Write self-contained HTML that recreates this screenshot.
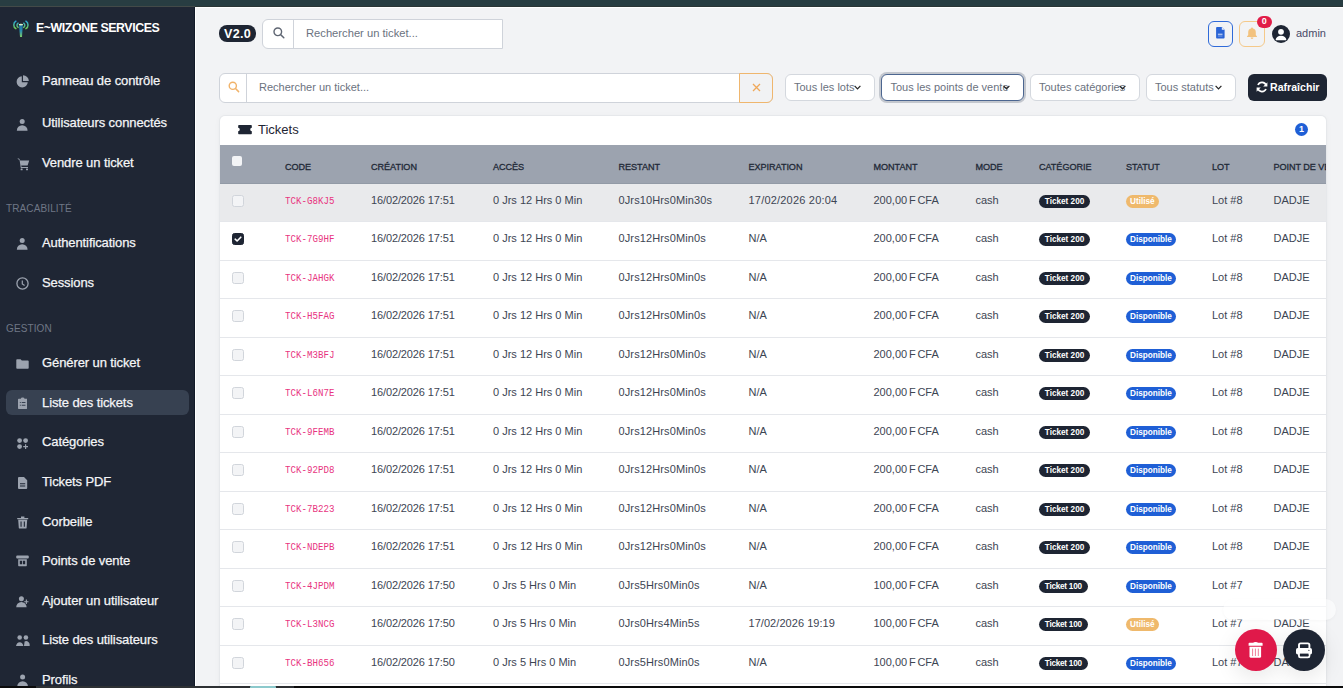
<!DOCTYPE html>
<html><head><meta charset="utf-8">
<style>
*{margin:0;padding:0;box-sizing:border-box}
html,body{width:1343px;height:688px;overflow:hidden;background:#f2f3f5;font-family:"Liberation Sans",sans-serif;position:relative}
.abs{position:absolute}
#topstrip{left:0;top:0;width:1343px;height:6px;background:#283d42}
#botstrip{left:0;top:686px;width:1343px;height:2px;background:#0b0b0c}
#sidebar{left:0;top:7px;width:195px;height:679px;background:#1f2634}
.logo-t{left:36px;top:21px;color:#fff;font-weight:700;font-size:12.4px;letter-spacing:-0.45px;white-space:nowrap}
.mi{position:absolute;left:0;width:195px;height:26px}
.mi svg{position:absolute;left:0;top:0}
.mi .tx{position:absolute;left:42px;top:5px;color:#f4f5f7;font-size:13px;white-space:nowrap;line-height:16px;letter-spacing:-0.1px;-webkit-text-stroke:0.25px #f4f5f7}
.sec{position:absolute;left:6px;color:#6f7786;font-size:10px;white-space:nowrap;line-height:12px;letter-spacing:0.12px}
.active-bg{left:6px;top:390px;width:183px;height:25px;background:#374151;border-radius:6px}
svg.si{position:absolute;fill:#9ca3af}
/* header */
.v2{left:219px;top:25px;width:37px;height:17px;background:#1e2533;border-radius:8px;color:#fff;font-weight:700;font-size:12.6px;line-height:19px;text-align:center;letter-spacing:0.25px}
.sbox{background:#fff;border:1px solid #cfd3da;border-radius:6px}
.sbox .div{position:absolute;top:0;bottom:0;width:1px;background:#cfd3da}
.ph{position:absolute;color:#6b7280;font-size:11px;white-space:nowrap;line-height:13px}
.sel{background:#fff;border:1px solid #d4d8de;border-radius:6px}
.sel .ph{top:6px;left:8px}
.chev{position:absolute}
.btn-ref{left:1248px;top:74px;width:79px;height:27px;background:#1e2533;border-radius:6px}
/* card */
.card{left:220px;top:116px;width:1106px;height:600px;background:#fff;border-radius:5px;box-shadow:0 0 0 1px #e6e8eb,0 1px 6px rgba(0,0,0,0.05);overflow:hidden}
.ctitle{position:absolute;left:38px;top:6px;color:#1e2533;font-size:13px;line-height:15px}
.cbadge{position:absolute;left:1075px;top:7px;width:13px;height:13px;border-radius:50%;background:#1f5fd6;color:#fff;font-weight:700;font-size:9px;line-height:13px;text-align:center}
.thead{position:absolute;left:0;top:29px;width:1106px;height:39px;background:#9ca3af;border-bottom:1px solid #929aa6}
.th{position:absolute;top:18px;color:#1f2937;font-weight:400;font-size:9.1px;line-height:9px;white-space:nowrap;-webkit-text-stroke:0.3px #1f2937;letter-spacing:-0.05px}
.hcb{position:absolute;left:12px;top:11px;width:10px;height:10px;background:#f3f4f6;border-radius:2px}
.tr{position:absolute;left:0;width:1106px;border-bottom:1px solid #e5e7eb;background:#fff}
.tr.hov{background:#e9eaec}
.td{position:absolute;top:10px;color:#3d4553;font-size:11px;line-height:13px;white-space:nowrap}
.td.code{font-family:"Liberation Mono",monospace;font-size:11.5px;color:#e8357f;top:9.6px;transform:scaleX(0.795);transform-origin:0 0}
.cb{position:absolute;left:12px;top:11px;width:12px;height:12px;background:#f3f4f6;border:1px solid #d1d5db;border-radius:2.5px}
.cb.chk{background:#1e2533;border-color:#1e2533}
.cb.chk svg{position:absolute;left:-1px;top:-1px}
.bdg{position:absolute;top:11px;height:13px;border-radius:7px;color:#fff;font-weight:700;font-size:8.2px;line-height:13px;padding:0 5px;white-space:nowrap}
.bdg.dark{background:#1e2533;padding:0 5.8px}
.bdg.orange{background:#efb96c;padding:0 4px}
.bdg.blue{background:#1f5fd6;padding:0 4px}
.fab{position:absolute;width:42px;height:42px;border-radius:50%;box-shadow:0 6px 22px rgba(0,0,0,0.10)}
</style></head><body>
<div id="topstrip" class="abs"></div>
<div class="abs" style="left:0;top:6px;width:195px;height:1px;background:#434a48"></div>
<div class="abs" style="left:195px;top:6px;width:1148px;height:1px;background:#2b3535"></div>
<div class="abs" style="left:195px;top:7px;width:1148px;height:1px;background:#fff"></div>
<div class="abs" style="left:195px;top:7px;width:1px;height:679px;background:#fff"></div>
<div id="sidebar" class="abs"></div>
<div class="abs" style="left:194px;top:7px;width:1px;height:679px;background:#121a28"></div>
<div class="abs active-bg"></div>

<!-- logo icon -->
<svg class="abs" style="left:8px;top:16px" width="28" height="24" viewBox="0 0 28 24">
 <defs>
  <linearGradient id="ga" gradientUnits="userSpaceOnUse" x1="0" y1="5" x2="0" y2="13"><stop offset="0" stop-color="#27a6e0"/><stop offset="1" stop-color="#74cc4c"/></linearGradient>
  <linearGradient id="gm" gradientUnits="userSpaceOnUse" x1="0" y1="9" x2="0" y2="21"><stop offset="0" stop-color="#1f6fa8"/><stop offset="0.5" stop-color="#2b8fb0"/><stop offset="1" stop-color="#7ccb66"/></linearGradient>
 </defs>
 <path d="M7.9 5.2 A4.3 4.3 0 0 0 7.9 12.6" stroke="url(#ga)" stroke-width="1.5" fill="none" stroke-linecap="round"/>
 <path d="M10.1 7.2 A2.5 2.5 0 0 0 10.1 11.4" stroke="url(#ga)" stroke-width="1.4" fill="none" stroke-linecap="round"/>
 <path d="M17.9 5.2 A4.3 4.3 0 0 1 17.9 12.6" stroke="url(#ga)" stroke-width="1.5" fill="none" stroke-linecap="round"/>
 <path d="M15.7 7.2 A2.5 2.5 0 0 1 15.7 11.4" stroke="url(#ga)" stroke-width="1.4" fill="none" stroke-linecap="round"/>
 <path d="M11 9.1 L14.8 9.1 L14 21 L12 21 Z" fill="url(#gm)"/>
 <ellipse cx="12.9" cy="8.6" rx="2.2" ry="0.9" fill="#d6f3c6"/>
</svg>
<div class="abs logo-t">E~WIZONE SERVICES</div>

<!-- sidebar icons -->
<svg class="si" style="left:16px;top:75px" width="13" height="13" viewBox="0 0 13 13"><path d="M5.8 1.2 A5.6 5.6 0 1 0 11.8 7.2 H5.8 Z"/><path d="M7 0.2 V6 H12.8 A5.8 5.8 0 0 0 7 0.2 Z"/></svg>
<svg class="si" style="left:16px;top:118px" width="12" height="13" viewBox="0 0 12 13"><circle cx="6.2" cy="3.5" r="2.5"/><path d="M0.8 12.8 A5.4 5.6 0 0 1 11.6 12.8 Z"/></svg>
<svg class="si" style="left:17px;top:158px" width="13" height="13" viewBox="0 0 13 13"><path d="M0.3 0.6 L2 0.6 L3.3 2.6 L12.2 2.6 L10.6 7.6 L4.2 7.6 L4.6 9 L11 9 L11 10 L3.8 10 L2.6 2.2 Z"/><rect x="3.6" y="10.5" width="2" height="1.7" rx="0.5"/><rect x="9" y="10.5" width="2" height="1.7" rx="0.5"/></svg>
<div class="sec" style="top:203px">TRACABILITÉ</div>
<svg class="si" style="left:16px;top:237px" width="12" height="13" viewBox="0 0 12 13"><circle cx="6.2" cy="3.5" r="2.5"/><path d="M0.8 12.8 A5.4 5.6 0 0 1 11.6 12.8 Z"/></svg>
<svg class="si" style="left:16px;top:277px" width="14" height="14" viewBox="0 0 14 14" style="fill:none"><circle cx="6.5" cy="6.5" r="5.6" fill="none" stroke="#9ca3af" stroke-width="1.3"/><path d="M6.3 3.4 V7 L8.6 8.6" fill="none" stroke="#9ca3af" stroke-width="1.2"/></svg>
<div class="sec" style="top:323px">GESTION</div>
<svg class="si" style="left:16px;top:359px" width="13" height="10" viewBox="0 0 13 10"><path d="M0.3 1 A0.8 0.8 0 0 1 1.1 0.2 L4.6 0.2 L5.8 1.5 L11.9 1.5 A0.8 0.8 0 0 1 12.7 2.3 L12.7 8.9 A0.8 0.8 0 0 1 11.9 9.7 L1.1 9.7 A0.8 0.8 0 0 1 0.3 8.9 Z"/></svg>
<svg class="si" style="left:18px;top:397px" width="9.3" height="12.5" viewBox="0 0 10 13" preserveAspectRatio="none"><path d="M0.8 1.8 H3 A2 1.4 0 0 1 7 1.8 H9.2 A0.8 0.8 0 0 1 10 2.6 V11.6 A0.8 0.8 0 0 1 9.2 12.4 H0.8 A0.8 0.8 0 0 1 0 11.6 V2.6 A0.8 0.8 0 0 1 0.8 1.8 Z M2 5.2 H3 V6.2 H2 Z M4 5.2 H8 V6.2 H4 Z M2 8 H3 V9 H2 Z M4 8 H8 V9 H4 Z" fill-rule="evenodd"/></svg>
<svg class="si" style="left:17px;top:438px" width="12" height="12" viewBox="0 0 12 12"><circle cx="2.6" cy="2.6" r="2.4"/><circle cx="8.6" cy="2.6" r="2.4"/><circle cx="2.6" cy="8.6" r="2.4"/><path d="M8 6.2 H9.2 V8 H11 V9.2 H9.2 V11 H8 V9.2 H6.2 V8 H8 Z"/></svg>
<svg class="si" style="left:18px;top:477px" width="10" height="12" viewBox="0 0 10 12"><path d="M1 0 H6 L9.2 3.2 V11 A1 1 0 0 1 8.2 12 H1 A1 1 0 0 1 0 11 V1 A1 1 0 0 1 1 0 Z M2 6.2 H7.2 V7.2 H2 Z M2 8.4 H7.2 V9.4 H2 Z" fill-rule="evenodd"/></svg>
<svg class="si" style="left:17px;top:516px" width="12" height="13" viewBox="0 0 12 13"><path d="M0.2 2 H11.2 V3.3 H0.2 Z M4 0.6 H7.4 V2 H4 Z M1.2 3.8 H10.2 L9.6 12 A0.8 0.8 0 0 1 8.8 12.6 H2.6 A0.8 0.8 0 0 1 1.8 12 Z M3.5 5.5 V10.8 H4.6 V5.5 Z M6.8 5.5 V10.8 H7.9 V5.5 Z" fill-rule="evenodd"/></svg>
<svg class="si" style="left:16px;top:555px" width="14" height="12" viewBox="0 0 14 12"><path d="M1.2 0.4 H11.8 A1 1 0 0 1 12.8 1.4 V2.6 A1 1 0 0 1 11.8 3.6 H1.2 A1 1 0 0 1 0.2 2.6 V1.4 A1 1 0 0 1 1.2 0.4 Z M2.2 4.2 H10.8 V10.6 A0.6 0.6 0 0 1 10.2 11.2 H2.8 A0.6 0.6 0 0 1 2.2 10.6 Z M3.8 5.8 V9.2 H6.1 V5.8 Z M6.9 5.8 V9.2 H9.2 V5.8 Z" fill-rule="evenodd"/></svg>
<svg class="si" style="left:16px;top:596px" width="13" height="12" viewBox="0 0 13 12"><circle cx="5.4" cy="2.7" r="2.5"/><path d="M0.2 11.2 A5.2 5.2 0 0 1 10.6 11.2 Z"/><path d="M9.8 3.6 H10.9 V5.2 H12.5 V6.3 H10.9 V7.9 H9.8 V6.3 H8.2 V5.2 H9.8 Z"/></svg>
<svg class="si" style="left:16px;top:635px" width="14" height="12" viewBox="0 0 14 12"><circle cx="3.7" cy="2.5" r="2.3"/><circle cx="9.9" cy="2.5" r="2.3"/><path d="M0 11 A3.8 5 0 0 1 7.4 11 Z"/><path d="M8 11 L8.6 6.4 A3.6 4 0 0 1 13.6 11 Z"/></svg>
<svg class="si" style="left:17px;top:674px" width="12" height="13" viewBox="0 0 12 13"><circle cx="5.6" cy="3" r="2.5"/><path d="M0.2 12.8 A5.4 5.6 0 0 1 11 12.8 Z"/></svg>

<div class="mi" style="top:68px"><div class="tx">Panneau de contrôle</div></div>
<div class="mi" style="top:110px"><div class="tx">Utilisateurs connectés</div></div>
<div class="mi" style="top:150px"><div class="tx">Vendre un ticket</div></div>
<div class="mi" style="top:230px"><div class="tx">Authentifications</div></div>
<div class="mi" style="top:270px"><div class="tx">Sessions</div></div>
<div class="mi" style="top:350px"><div class="tx">Générer un ticket</div></div>
<div class="mi" style="top:390px"><div class="tx">Liste des tickets</div></div>
<div class="mi" style="top:429px"><div class="tx">Catégories</div></div>
<div class="mi" style="top:469px"><div class="tx">Tickets PDF</div></div>
<div class="mi" style="top:509px"><div class="tx">Corbeille</div></div>
<div class="mi" style="top:548px"><div class="tx">Points de vente</div></div>
<div class="mi" style="top:588px"><div class="tx">Ajouter un utilisateur</div></div>
<div class="mi" style="top:627px"><div class="tx">Liste des utilisateurs</div></div>
<div class="mi" style="top:667px"><div class="tx">Profils</div></div>

<!-- top header -->
<div class="abs v2">V2.0</div>
<div class="abs sbox" style="left:262px;top:19px;width:241px;height:30px;border-radius:6px 0 0 6px">
  <div class="div" style="left:30px"></div>
  <svg class="abs" style="left:9.5px;top:7.3px" width="12" height="12" viewBox="0 0 12 12"><circle cx="4.8" cy="4.8" r="3.8" fill="none" stroke="#5f6673" stroke-width="1.4"/><path d="M7.5 7.5 L10.8 10.8" stroke="#5f6673" stroke-width="1.5" stroke-linecap="round"/></svg>
  <div class="ph" style="left:43px;top:7px;font-size:11.2px">Rechercher un ticket...</div>
</div>
<!-- right header icons -->
<div class="abs" style="left:1208px;top:21px;width:25px;height:26px;border:1.4px solid #2f6ad9;border-radius:6px"></div>
<svg class="abs" style="left:1216px;top:27px" width="9" height="11.5" viewBox="0 0 9 11.5"><path d="M1 0 H5.8 L8.6 2.8 V10.5 A0.9 0.9 0 0 1 7.7 11.4 H1 A0.9 0.9 0 0 1 0.1 10.5 V0.9 A0.9 0.9 0 0 1 1 0 Z" fill="#2a64d6"/><path d="M5.8 0 V2.8 H8.6 Z" fill="#e8eefb"/><rect x="1.9" y="6.6" width="4.6" height="1.5" fill="#a9c0ee"/><rect x="1.9" y="8.6" width="4.6" height="0.9" fill="#7ea0e6"/></svg>
<div class="abs" style="left:1239px;top:21px;width:26px;height:26px;border:1.4px solid #f5c98a;border-radius:6px"></div>
<svg class="abs" style="left:1246px;top:27px" width="12" height="12" viewBox="0 0 12 12"><path d="M6 0.6 A1 1 0 0 1 7 1.6 A3.8 3.8 0 0 1 9.8 5.4 V8 L11 9.4 V10 H1 V9.4 L2.2 8 V5.4 A3.8 3.8 0 0 1 5 1.6 A1 1 0 0 1 6 0.6 Z" fill="#f2c27f"/><path d="M4.6 10.6 A1.4 1.4 0 0 0 7.4 10.6 Z" fill="#f2c27f"/></svg>
<div class="abs" style="left:1257px;top:15.5px;width:14.5px;height:12.5px;border-radius:7px;background:#e11d48;color:#fff;font-weight:700;font-size:9px;line-height:11.5px;text-align:center">0</div>
<div class="abs" style="left:1272px;top:25px;width:18px;height:18px;border-radius:50%;background:#1e2533;overflow:hidden">
 <svg width="18" height="18" viewBox="0 0 18 18"><circle cx="9" cy="6.8" r="2.9" fill="#fff"/><path d="M3.6 15.2 A5.4 4.4 0 0 1 14.4 15.2 Z" fill="#fff"/></svg>
</div>
<div class="abs" style="left:1296px;top:27px;color:#4b4a68;font-size:11px;line-height:13px">admin</div>

<!-- filters row -->
<div class="abs sbox" style="left:219px;top:73px;width:554px;height:29.5px;border-radius:6px;overflow:hidden">
  <div class="div" style="left:26px"></div>
  <svg class="abs" style="left:7.5px;top:7px" width="12" height="12" viewBox="0 0 12 12"><circle cx="4.8" cy="4.8" r="3.6" fill="none" stroke="#f1b36a" stroke-width="1.4"/><path d="M7.5 7.5 L10.6 10.6" stroke="#f1b36a" stroke-width="1.5" stroke-linecap="round"/></svg>
  <div class="ph" style="left:39px;top:7px">Rechercher un ticket...</div>
</div>
<div class="abs" style="left:739px;top:73px;width:34px;height:29.5px;background:#f1f2f4;border:1px solid #efb66e;border-radius:0 6px 6px 0"></div>
<svg class="abs" style="left:752px;top:83px" width="9" height="9" viewBox="0 0 9 9"><path d="M1 1 L8 8 M8 1 L1 8" stroke="#f0a95a" stroke-width="1.3"/></svg>

<div class="abs sel" style="left:785px;top:74px;width:90px;height:27px"><div class="ph">Tous les lots</div></div>
<div class="abs sel" style="left:881px;top:74px;width:143px;height:27px;border:1.5px solid #4c6690;box-shadow:0 0 0 2px #c3c7ce"><div class="ph" style="left:8.5px;top:5.5px">Tous les points de vente</div></div>
<div class="abs sel" style="left:1030px;top:74px;width:110px;height:27px"><div class="ph">Toutes catégories</div></div>
<div class="abs sel" style="left:1146px;top:74px;width:90px;height:27px"><div class="ph">Tous statuts</div></div>
<svg class="abs chev" style="left:854px;top:85px" width="7" height="5" viewBox="0 0 7 5"><path d="M0.6 0.8 L3.5 3.8 L6.4 0.8" stroke="#222" stroke-width="1.2" fill="none"/></svg>
<svg class="abs chev" style="left:1003px;top:85px" width="7" height="5" viewBox="0 0 7 5"><path d="M0.6 0.8 L3.5 3.8 L6.4 0.8" stroke="#222" stroke-width="1.2" fill="none"/></svg>
<svg class="abs chev" style="left:1119px;top:85px" width="7" height="5" viewBox="0 0 7 5"><path d="M0.6 0.8 L3.5 3.8 L6.4 0.8" stroke="#222" stroke-width="1.2" fill="none"/></svg>
<svg class="abs chev" style="left:1215px;top:85px" width="7" height="5" viewBox="0 0 7 5"><path d="M0.6 0.8 L3.5 3.8 L6.4 0.8" stroke="#222" stroke-width="1.2" fill="none"/></svg>

<div class="abs btn-ref">
 <svg class="abs" style="left:8px;top:7px" width="12" height="12" viewBox="0 0 12 12"><path d="M10.2 4.4 A4.4 4.4 0 0 0 2 4" stroke="#fff" stroke-width="1.7" fill="none"/><path d="M11.4 1.2 V5.4 H7.2 Z" fill="#fff"/><path d="M1.8 7.6 A4.4 4.4 0 0 0 10 8" stroke="#fff" stroke-width="1.7" fill="none"/><path d="M0.6 10.8 V6.6 H4.8 Z" fill="#fff"/></svg>
 <div class="abs" style="left:22px;top:7px;color:#fff;font-weight:700;font-size:10.6px;line-height:13px;white-space:nowrap">Rafraîchir</div>
</div>

<!-- card -->
<div class="abs card">
  <svg class="abs" style="left:18px;top:9px" width="14" height="10" viewBox="0 0 15 10" preserveAspectRatio="none"><path d="M1 0 H14 A0.8 0.8 0 0 1 14.8 0.8 V2.8 A1.6 1.6 0 0 0 14.8 6.2 V8.4 A0.8 0.8 0 0 1 14 9.2 H1 A0.8 0.8 0 0 1 0.2 8.4 V6.2 A1.6 1.6 0 0 0 0.2 2.8 V0.8 A0.8 0.8 0 0 1 1 0 Z" fill="#1e2533"/></svg>
  <div class="ctitle">Tickets</div>
  <div class="cbadge">1</div>
  <div class="thead"><div class="th" style="left:65px">CODE</div><div class="th" style="left:151px">CRÉATION</div><div class="th" style="left:273px">ACCÈS</div><div class="th" style="left:398.5px">RESTANT</div><div class="th" style="left:528.5px">EXPIRATION</div><div class="th" style="left:653.5px">MONTANT</div><div class="th" style="left:755.5px">MODE</div><div class="th" style="left:819px">CATÉGORIE</div><div class="th" style="left:906px">STATUT</div><div class="th" style="left:992px">LOT</div><div class="th" style="left:1053.5px">POINT DE VENTE</div><div class="hcb"></div></div>
<div class="tr hov" style="top:68px;height:38px"><div class="cb"></div><div class="td code" style="left:65px">TCK-G8KJ5</div><div class="td" style="left:151px;letter-spacing:-0.12px">16/02/2026 17:51</div><div class="td" style="left:273px">0 Jrs 12 Hrs 0 Min</div><div class="td" style="left:398.5px;letter-spacing:0.12px">0Jrs10Hrs0Min30s</div><div class="td" style="left:528.5px;letter-spacing:0.2px">17/02/2026 20:04</div><div class="td" style="left:653.5px;word-spacing:-1.3px">200,00 F CFA</div><div class="td" style="left:755.5px">cash</div><div class="bdg dark" style="left:819px">Ticket 200</div><div class="bdg orange" style="left:906px">Utilisé</div><div class="td" style="left:992px">Lot #8</div><div class="td" style="left:1053.5px">DADJE</div></div>
<div class="tr" style="top:106px;height:39px"><div class="cb chk"><svg width="12" height="12" viewBox="0 0 12 12"><path d="M3.2 6.2 L5.1 8 L8.8 4.2" stroke="#fff" stroke-width="1.6" fill="none" stroke-linecap="round" stroke-linejoin="round"/></svg></div><div class="td code" style="left:65px">TCK-7G9HF</div><div class="td" style="left:151px;letter-spacing:-0.12px">16/02/2026 17:51</div><div class="td" style="left:273px">0 Jrs 12 Hrs 0 Min</div><div class="td" style="left:398.5px;letter-spacing:0.12px">0Jrs12Hrs0Min0s</div><div class="td" style="left:528.5px;letter-spacing:0.05px">N/A</div><div class="td" style="left:653.5px;word-spacing:-1.3px">200,00 F CFA</div><div class="td" style="left:755.5px">cash</div><div class="bdg dark" style="left:819px">Ticket 200</div><div class="bdg blue" style="left:906px">Disponible</div><div class="td" style="left:992px">Lot #8</div><div class="td" style="left:1053.5px">DADJE</div></div>
<div class="tr" style="top:145px;height:38px"><div class="cb"></div><div class="td code" style="left:65px">TCK-JAHGK</div><div class="td" style="left:151px;letter-spacing:-0.12px">16/02/2026 17:51</div><div class="td" style="left:273px">0 Jrs 12 Hrs 0 Min</div><div class="td" style="left:398.5px;letter-spacing:0.12px">0Jrs12Hrs0Min0s</div><div class="td" style="left:528.5px;letter-spacing:0.05px">N/A</div><div class="td" style="left:653.5px;word-spacing:-1.3px">200,00 F CFA</div><div class="td" style="left:755.5px">cash</div><div class="bdg dark" style="left:819px">Ticket 200</div><div class="bdg blue" style="left:906px">Disponible</div><div class="td" style="left:992px">Lot #8</div><div class="td" style="left:1053.5px">DADJE</div></div>
<div class="tr" style="top:183px;height:39px"><div class="cb"></div><div class="td code" style="left:65px">TCK-H5FAG</div><div class="td" style="left:151px;letter-spacing:-0.12px">16/02/2026 17:51</div><div class="td" style="left:273px">0 Jrs 12 Hrs 0 Min</div><div class="td" style="left:398.5px;letter-spacing:0.12px">0Jrs12Hrs0Min0s</div><div class="td" style="left:528.5px;letter-spacing:0.05px">N/A</div><div class="td" style="left:653.5px;word-spacing:-1.3px">200,00 F CFA</div><div class="td" style="left:755.5px">cash</div><div class="bdg dark" style="left:819px">Ticket 200</div><div class="bdg blue" style="left:906px">Disponible</div><div class="td" style="left:992px">Lot #8</div><div class="td" style="left:1053.5px">DADJE</div></div>
<div class="tr" style="top:222px;height:38px"><div class="cb"></div><div class="td code" style="left:65px">TCK-M3BFJ</div><div class="td" style="left:151px;letter-spacing:-0.12px">16/02/2026 17:51</div><div class="td" style="left:273px">0 Jrs 12 Hrs 0 Min</div><div class="td" style="left:398.5px;letter-spacing:0.12px">0Jrs12Hrs0Min0s</div><div class="td" style="left:528.5px;letter-spacing:0.05px">N/A</div><div class="td" style="left:653.5px;word-spacing:-1.3px">200,00 F CFA</div><div class="td" style="left:755.5px">cash</div><div class="bdg dark" style="left:819px">Ticket 200</div><div class="bdg blue" style="left:906px">Disponible</div><div class="td" style="left:992px">Lot #8</div><div class="td" style="left:1053.5px">DADJE</div></div>
<div class="tr" style="top:260px;height:39px"><div class="cb"></div><div class="td code" style="left:65px">TCK-L6N7E</div><div class="td" style="left:151px;letter-spacing:-0.12px">16/02/2026 17:51</div><div class="td" style="left:273px">0 Jrs 12 Hrs 0 Min</div><div class="td" style="left:398.5px;letter-spacing:0.12px">0Jrs12Hrs0Min0s</div><div class="td" style="left:528.5px;letter-spacing:0.05px">N/A</div><div class="td" style="left:653.5px;word-spacing:-1.3px">200,00 F CFA</div><div class="td" style="left:755.5px">cash</div><div class="bdg dark" style="left:819px">Ticket 200</div><div class="bdg blue" style="left:906px">Disponible</div><div class="td" style="left:992px">Lot #8</div><div class="td" style="left:1053.5px">DADJE</div></div>
<div class="tr" style="top:299px;height:38px"><div class="cb"></div><div class="td code" style="left:65px">TCK-9FEMB</div><div class="td" style="left:151px;letter-spacing:-0.12px">16/02/2026 17:51</div><div class="td" style="left:273px">0 Jrs 12 Hrs 0 Min</div><div class="td" style="left:398.5px;letter-spacing:0.12px">0Jrs12Hrs0Min0s</div><div class="td" style="left:528.5px;letter-spacing:0.05px">N/A</div><div class="td" style="left:653.5px;word-spacing:-1.3px">200,00 F CFA</div><div class="td" style="left:755.5px">cash</div><div class="bdg dark" style="left:819px">Ticket 200</div><div class="bdg blue" style="left:906px">Disponible</div><div class="td" style="left:992px">Lot #8</div><div class="td" style="left:1053.5px">DADJE</div></div>
<div class="tr" style="top:337px;height:39px"><div class="cb"></div><div class="td code" style="left:65px">TCK-92PD8</div><div class="td" style="left:151px;letter-spacing:-0.12px">16/02/2026 17:51</div><div class="td" style="left:273px">0 Jrs 12 Hrs 0 Min</div><div class="td" style="left:398.5px;letter-spacing:0.12px">0Jrs12Hrs0Min0s</div><div class="td" style="left:528.5px;letter-spacing:0.05px">N/A</div><div class="td" style="left:653.5px;word-spacing:-1.3px">200,00 F CFA</div><div class="td" style="left:755.5px">cash</div><div class="bdg dark" style="left:819px">Ticket 200</div><div class="bdg blue" style="left:906px">Disponible</div><div class="td" style="left:992px">Lot #8</div><div class="td" style="left:1053.5px">DADJE</div></div>
<div class="tr" style="top:376px;height:38px"><div class="cb"></div><div class="td code" style="left:65px">TCK-7B223</div><div class="td" style="left:151px;letter-spacing:-0.12px">16/02/2026 17:51</div><div class="td" style="left:273px">0 Jrs 12 Hrs 0 Min</div><div class="td" style="left:398.5px;letter-spacing:0.12px">0Jrs12Hrs0Min0s</div><div class="td" style="left:528.5px;letter-spacing:0.05px">N/A</div><div class="td" style="left:653.5px;word-spacing:-1.3px">200,00 F CFA</div><div class="td" style="left:755.5px">cash</div><div class="bdg dark" style="left:819px">Ticket 200</div><div class="bdg blue" style="left:906px">Disponible</div><div class="td" style="left:992px">Lot #8</div><div class="td" style="left:1053.5px">DADJE</div></div>
<div class="tr" style="top:414px;height:39px"><div class="cb"></div><div class="td code" style="left:65px">TCK-NDEPB</div><div class="td" style="left:151px;letter-spacing:-0.12px">16/02/2026 17:51</div><div class="td" style="left:273px">0 Jrs 12 Hrs 0 Min</div><div class="td" style="left:398.5px;letter-spacing:0.12px">0Jrs12Hrs0Min0s</div><div class="td" style="left:528.5px;letter-spacing:0.05px">N/A</div><div class="td" style="left:653.5px;word-spacing:-1.3px">200,00 F CFA</div><div class="td" style="left:755.5px">cash</div><div class="bdg dark" style="left:819px">Ticket 200</div><div class="bdg blue" style="left:906px">Disponible</div><div class="td" style="left:992px">Lot #8</div><div class="td" style="left:1053.5px">DADJE</div></div>
<div class="tr" style="top:453px;height:38px"><div class="cb"></div><div class="td code" style="left:65px">TCK-4JPDM</div><div class="td" style="left:151px;letter-spacing:-0.12px">16/02/2026 17:50</div><div class="td" style="left:273px">0 Jrs 5 Hrs 0 Min</div><div class="td" style="left:398.5px;letter-spacing:0.12px">0Jrs5Hrs0Min0s</div><div class="td" style="left:528.5px;letter-spacing:0.05px">N/A</div><div class="td" style="left:653.5px;word-spacing:-1.3px">100,00 F CFA</div><div class="td" style="left:755.5px">cash</div><div class="bdg dark" style="left:819px;letter-spacing:-0.25px">Ticket 100</div><div class="bdg blue" style="left:906px">Disponible</div><div class="td" style="left:992px">Lot #7</div><div class="td" style="left:1053.5px">DADJE</div></div>
<div class="tr" style="top:491px;height:39px"><div class="cb"></div><div class="td code" style="left:65px">TCK-L3NCG</div><div class="td" style="left:151px;letter-spacing:-0.12px">16/02/2026 17:50</div><div class="td" style="left:273px">0 Jrs 5 Hrs 0 Min</div><div class="td" style="left:398.5px;letter-spacing:0.12px">0Jrs0Hrs4Min5s</div><div class="td" style="left:528.5px;letter-spacing:0.05px">17/02/2026 19:19</div><div class="td" style="left:653.5px;word-spacing:-1.3px">100,00 F CFA</div><div class="td" style="left:755.5px">cash</div><div class="bdg dark" style="left:819px;letter-spacing:-0.25px">Ticket 100</div><div class="bdg orange" style="left:906px">Utilisé</div><div class="td" style="left:992px">Lot #7</div><div class="td" style="left:1053.5px">DADJE</div></div>
<div class="tr" style="top:530px;height:38px"><div class="cb"></div><div class="td code" style="left:65px">TCK-BH656</div><div class="td" style="left:151px;letter-spacing:-0.12px">16/02/2026 17:50</div><div class="td" style="left:273px">0 Jrs 5 Hrs 0 Min</div><div class="td" style="left:398.5px;letter-spacing:0.12px">0Jrs5Hrs0Min0s</div><div class="td" style="left:528.5px;letter-spacing:0.05px">N/A</div><div class="td" style="left:653.5px;word-spacing:-1.3px">100,00 F CFA</div><div class="td" style="left:755.5px">cash</div><div class="bdg dark" style="left:819px;letter-spacing:-0.25px">Ticket 100</div><div class="bdg blue" style="left:906px">Disponible</div><div class="td" style="left:992px">Lot #7</div><div class="td" style="left:1053.5px">DADJE</div></div>
</div>

<!-- FABs -->
<div class="abs" style="left:1223px;top:599px;width:113px;height:21px;border-radius:11px;background:rgba(255,255,255,0.55);box-shadow:0 1px 3px rgba(0,0,0,0.035)"></div>
<div class="fab" style="left:1235px;top:629px;background:#e0194a">
 <svg class="abs" style="left:0;top:0" width="42" height="42" viewBox="0 0 42 42">
  <path d="M13.6 14.6 Q13.6 13.8 14.4 13.8 L18.2 13.8 Q18.6 12.9 20.6 12.9 Q22.6 12.9 23 13.8 L26.8 13.8 Q27.6 13.8 27.6 14.6 L27.6 16.8 L13.6 16.8 Z" fill="#fff"/>
  <path d="M14.5 17.7 L26.1 17.7 L26.1 27.2 Q26.1 28.7 24.6 28.7 L16 28.7 Q14.5 28.7 14.5 27.2 Z" fill="#fff"/>
  <rect x="17" y="19.6" width="1.1" height="7.4" fill="#f08aa3"/>
  <rect x="19.9" y="19.6" width="1.1" height="7.4" fill="#f08aa3"/>
  <rect x="22.8" y="19.6" width="1.1" height="7.4" fill="#f08aa3"/>
 </svg>
</div>
<div class="fab" style="left:1283px;top:629px;background:#1e2533">
 <svg class="abs" style="left:0;top:0" width="42" height="42" viewBox="0 0 42 42">
  <rect x="16" y="14.4" width="10.4" height="6" rx="1.6" fill="none" stroke="#fff" stroke-width="1.9"/>
  <rect x="13" y="19" width="16" height="6.6" rx="1.8" fill="#fff"/>
  <rect x="16" y="23.2" width="10.4" height="5.2" rx="1.4" fill="none" stroke="#fff" stroke-width="1.9"/>
  <rect x="16.9" y="24.6" width="8.6" height="2.4" fill="#1e2533"/>
  <circle cx="25.9" cy="21.3" r="0.6" fill="#1e2533"/>
 </svg>
</div>

<div id="botstrip" class="abs"></div>
<div class="abs" style="left:36px;top:686px;width:258px;height:2px;background:#2d3033"></div>
<div class="abs" style="left:250px;top:686px;width:26px;height:2px;background:#8cc9cc;border-radius:1px 1px 0 0"></div>
</body></html>
